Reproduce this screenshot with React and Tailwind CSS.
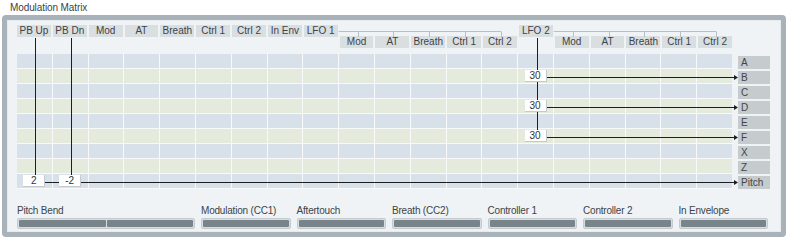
import React from 'react';

// column geometry shared by header, grid and the connector drawing
const X0 = 18;
const PITCH = 35.85;
const COL_W = 33.85;
const cx = (i) => X0 + PITCH * i + COL_W / 2;
const GRID_TOP = 55;
const rowMid = (r) => GRID_TOP + 15 * r + 7.5;

const TOP_ROW = ['PB Up', 'PB Dn', 'Mod', 'AT', 'Breath', 'Ctrl 1', 'Ctrl 2', 'In Env', 'LFO 1', null, null, null, null, null, 'LFO 2', null, null, null, null, null];
const SUB_ROW = [null, null, null, null, null, null, null, null, null, 'Mod', 'AT', 'Breath', 'Ctrl 1', 'Ctrl 2', null, 'Mod', 'AT', 'Breath', 'Ctrl 1', 'Ctrl 2'];
const TARGETS = ['A', 'B', 'C', 'D', 'E', 'F', 'X', 'Z', 'Pitch'];

// row -> { col: value }
const VALUES = {
  1: { 14: '30' },
  3: { 14: '30' },
  5: { 14: '30' },
  8: { 0: '2', 1: '-2' },
};

const CONTROLS = ['Modulation (CC1)', 'Aftertouch', 'Breath (CC2)', 'Controller 1', 'Controller 2', 'In Envelope'];

const HeaderBtn = ({ label }) =>
  label ? (
    <div className="h-[12px] bg-[#d9dee1] text-[#3d4347] text-[10px] leading-[12px] text-center whitespace-nowrap overflow-hidden">
      {label}
    </div>
  ) : (
    <div />
  );

const Arrow = ({ x1, x2, y }) => (
  <g>
    <line x1={x1} y1={y} x2={x2 - 3} y2={y} stroke="#1c1f22" strokeWidth="1" />
    <polygon points={`${x2 - 4},${y - 2.5} ${x2},${y} ${x2 - 4},${y + 2.5}`} fill="#1c1f22" />
  </g>
);

const Wires = () => {
  const tickY = 31.5;
  const lfo1 = [9, 10, 11, 12, 13];
  const lfo2 = [15, 16, 17, 18, 19];
  const end = 738;
  return (
    <svg className="absolute inset-0 pointer-events-none" width="788" height="241">
      {/* LFO sub-source brackets */}
      <g stroke="#b7c0c6" strokeWidth="1" fill="none">
        <line x1={X0 + PITCH * 8 + COL_W} y1={tickY} x2={cx(13)} y2={tickY} />
        {lfo1.map((i) => (
          <line key={i} x1={Math.round(cx(i)) + 0.5} y1={tickY} x2={Math.round(cx(i)) + 0.5} y2={37} />
        ))}
        <line x1={X0 + PITCH * 14 + COL_W} y1={tickY} x2={cx(19)} y2={tickY} />
        {lfo2.map((i) => (
          <line key={i} x1={Math.round(cx(i)) + 0.5} y1={tickY} x2={Math.round(cx(i)) + 0.5} y2={37} />
        ))}
      </g>
      {/* routing */}
      <g stroke="#1c1f22" strokeWidth="1">
        <line x1={Math.round(cx(0)) + 0.5} y1={38} x2={Math.round(cx(0)) + 0.5} y2={rowMid(8)} />
        <line x1={Math.round(cx(1)) + 0.5} y1={38} x2={Math.round(cx(1)) + 0.5} y2={rowMid(8)} />
        <line x1={Math.round(cx(14)) + 0.5} y1={38} x2={Math.round(cx(14)) + 0.5} y2={rowMid(5)} />
        <line x1={cx(0)} y1={rowMid(8)} x2={cx(1)} y2={rowMid(8)} />
      </g>
      <Arrow x1={cx(1)} x2={end} y={rowMid(8)} />
      <Arrow x1={cx(14)} x2={end} y={rowMid(1)} />
      <Arrow x1={cx(14)} x2={end} y={rowMid(3)} />
      <Arrow x1={cx(14)} x2={end} y={rowMid(5)} />
    </svg>
  );
};

const Slider = ({ split }) => (
  <div className="mt-[1px] h-[11px] rounded-[2px] border border-[#c3cbd0] bg-[#d6dde1] p-px flex gap-px">
    <div className="flex-1 bg-[#78838a] rounded-[1px]" />
    {split && <div className="flex-1 bg-[#78838a] rounded-[1px]" />}
  </div>
);

export default function App() {
  return (
    <div
      className="relative w-[788px] h-[241px] overflow-hidden bg-white text-[#3d4347]"
      style={{ fontFamily: '"Liberation Sans", Arial, sans-serif' }}
    >
      <div className="h-[15px] pl-[10px] pt-[2px] text-[10px] leading-[12px] tracking-[-0.1px]">Modulation Matrix</div>

      <div className="ml-[2px] w-[784px] h-[222px] rounded-[4px] border-[5px] border-[#a9b2b8]">
        <div className="h-full border border-[#e6ebee] bg-[#eff3f5] pl-[9px] pt-[4px]">
          {/* source buttons */}
          <div className="w-[715px] grid grid-cols-[repeat(20,minmax(0,1fr))] gap-x-[2px] h-[11px]">
            {TOP_ROW.map((l, i) => (
              <HeaderBtn key={i} label={l} />
            ))}
          </div>
          <div className="w-[715px] grid grid-cols-[repeat(20,minmax(0,1fr))] gap-x-[2px] h-[12px]">
            {SUB_ROW.map((l, i) => (
              <HeaderBtn key={i} label={l} />
            ))}
          </div>

          {/* matrix */}
          <div className="mt-[6px] flex">
            <div className="w-[715px] grid grid-cols-[repeat(20,minmax(0,1fr))] auto-rows-[14px] gap-px bg-[#f7f9fa] pb-px">
              {TARGETS.map((t, r) =>
                Array.from({ length: 20 }).map((_, c) => {
                  const v = VALUES[r] && VALUES[r][c];
                  return (
                    <div
                      key={t + c}
                      className={`flex items-center justify-center ${r % 2 === 0 ? 'bg-[#d8e1e9]' : 'bg-[#e4eadc]'}`}
                    >
                      {v && (
                        <div className="relative z-10 w-[22px] h-[12px] bg-white border-r border-b border-[#c4cacd] text-[10px] leading-[11px] text-center text-[#2e3336]">
                          {v}
                        </div>
                      )}
                    </div>
                  );
                })
              )}
            </div>
            <div className="ml-[6px] w-[32px] pt-[2px] flex flex-col gap-[2px]">
              {TARGETS.map((t) => (
                <div key={t} className="h-[13px] bg-[#c6cbce] pl-[3px] text-[10px] leading-[13px] text-[#3f4549]">
                  {t}
                </div>
              ))}
            </div>
          </div>

          {/* controller sliders */}
          <div className="mt-[16px] flex gap-[6px] text-[10px] leading-[12px]">
            <div className="w-[178px]">
              <div className="h-[12px] tracking-[-0.2px]">Pitch Bend</div>
              <Slider split />
            </div>
            {CONTROLS.map((c) => (
              <div key={c} className="w-[89.5px]">
                <div className="h-[12px] whitespace-nowrap tracking-[-0.2px]">{c}</div>
                <Slider />
              </div>
            ))}
          </div>
        </div>
      </div>

      <Wires />
    </div>
  );
}
